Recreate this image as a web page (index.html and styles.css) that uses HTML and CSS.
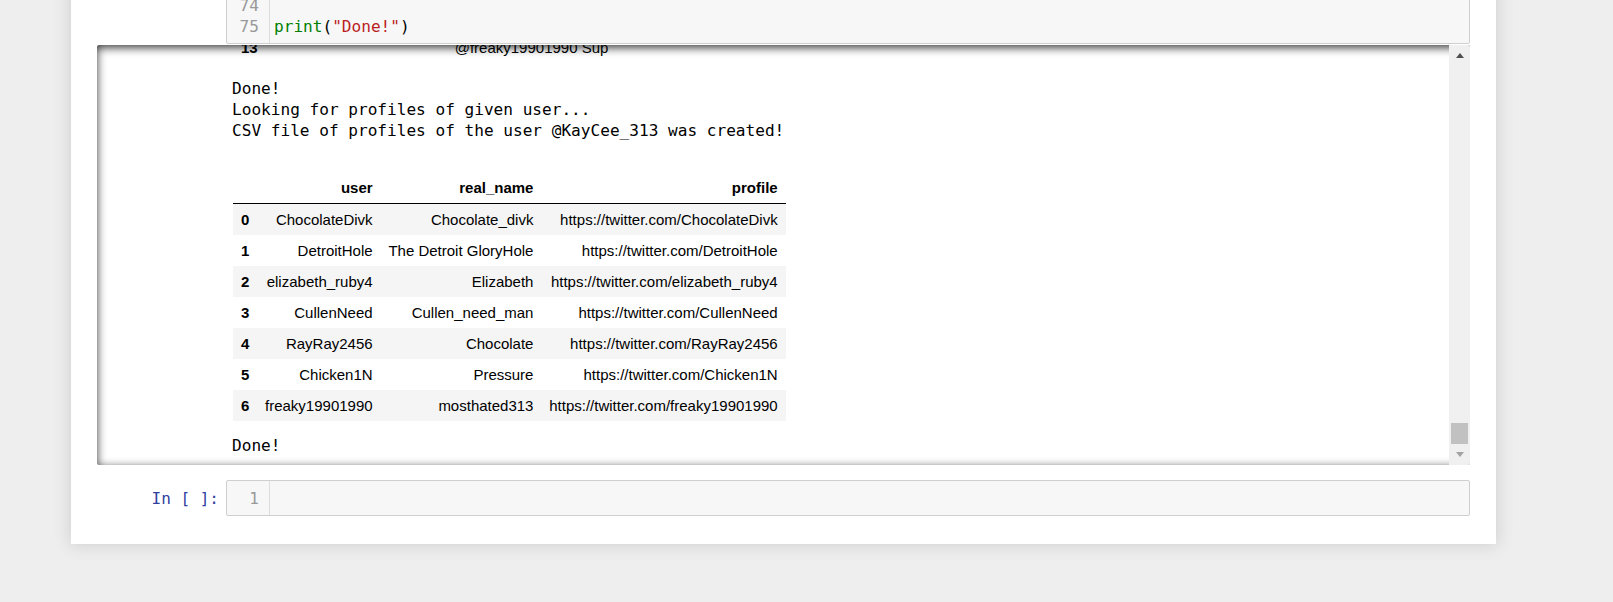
FILE: index.html
```html
<!DOCTYPE html>
<html>
<head>
<meta charset="utf-8">
<title>Notebook</title>
<link rel="stylesheet" href="styles.css">
</head>
<body>
<div class="notebook">
  <div class="cell">
    <div class="prompt"></div>
    <div class="input-area">
      <div class="gutter"><div>74</div><div>75</div></div>
      <div class="code"><div>&nbsp;</div><div><span class="builtin">print</span>(<span class="str">"Done!"</span>)</div></div>
    </div>
  </div>

  <div class="output-scroll">
    <div class="output-content">
      <table class="df df-clipped">
        <tbody>
          <tr><th>13</th><td class="wide">@freaky19901990 Sup</td></tr>
        </tbody>
      </table>
      <pre class="stream">Done!
Looking for profiles of given user...
CSV file of profiles of the user @KayCee_313 was created!</pre>
      <table class="df df-main">
        <thead>
          <tr><th></th><th>user</th><th>real_name</th><th>profile</th></tr>
        </thead>
        <tbody>
          <tr><th>0</th><td>ChocolateDivk</td><td>Chocolate_divk</td><td>https://twitter.com/ChocolateDivk</td></tr>
          <tr><th>1</th><td>DetroitHole</td><td>The Detroit GloryHole</td><td>https://twitter.com/DetroitHole</td></tr>
          <tr><th>2</th><td>elizabeth_ruby4</td><td>Elizabeth</td><td>https://twitter.com/elizabeth_ruby4</td></tr>
          <tr><th>3</th><td>CullenNeed</td><td>Cullen_need_man</td><td>https://twitter.com/CullenNeed</td></tr>
          <tr><th>4</th><td>RayRay2456</td><td>Chocolate</td><td>https://twitter.com/RayRay2456</td></tr>
          <tr><th>5</th><td>Chicken1N</td><td>Pressure</td><td>https://twitter.com/Chicken1N</td></tr>
          <tr><th>6</th><td>freaky19901990</td><td>mosthated313</td><td>https://twitter.com/freaky19901990</td></tr>
        </tbody>
      </table>
      <pre class="stream stream-last">Done!</pre>
    </div>
    <div class="scrollbar">
      <div class="sb-btn"><span class="arrow-up"></span></div>
      <div class="sb-track"><div class="sb-thumb"></div></div>
      <div class="sb-btn"><span class="arrow-down"></span></div>
    </div>
  </div>

  <div class="cell cell-next">
    <div class="prompt">In [ ]:</div>
    <div class="input-area input-next">
      <div class="gutter"><div>1</div></div>
      <div class="code"><div>&nbsp;</div></div>
    </div>
  </div>
</div>
</body>
</html>
```

FILE: styles.css
```css
html, body {
  margin: 0;
  padding: 0;
}

body {
  background: #eeeeee;
  height: 602px;
  overflow: hidden;
  font-family: "Liberation Sans", Arial, sans-serif;
}

.notebook {
  width: 1425px;
  margin: -30px 0 0 71px;
  padding: 19px 0 28px;
  background: #ffffff;
  box-shadow: 0 0 15px 1px rgba(87, 87, 87, 0.2);
}

.cell {
  display: flex;
}

.prompt {
  width: 155px;
  box-sizing: border-box;
  padding: 8px 7px 0 0;
  text-align: right;
  font-family: "DejaVu Sans Mono", monospace;
  font-size: 16px;
  line-height: 21px;
  color: #303f9f;
  white-space: pre;
}

.input-area {
  width: 1244px;
  box-sizing: border-box;
  display: flex;
  background: #f7f7f7;
  border: 1px solid #cfcfcf;
  border-radius: 2px;
  padding: 5px 0 6px;
  font-family: "DejaVu Sans Mono", monospace;
  font-size: 16.1px;
  line-height: 21px;
}

.gutter {
  width: 43px;
  box-sizing: border-box;
  margin: -5px 0 -6px;
  padding: 5px 10px 6px 0;
  border-right: 1px solid #dddddd;
  text-align: right;
  color: #999999;
}

.code {
  padding-left: 4px;
  color: #000000;
  white-space: pre;
}

.builtin { color: #008000; }
.str { color: #ba2121; }

.cell-next {
  margin-top: 15px;
}

.input-next {
  padding: 7px 0 6px;
}

.input-next .gutter {
  margin: -7px 0 -6px;
  padding: 7px 10px 6px 0;
}

/* output scroll area */
.output-scroll {
  margin: 1px 0 0 26px;
  width: 1373px;
  height: 420px;
  display: flex;
  border-radius: 2px;
  box-shadow: inset 0 2.5px 10px rgba(0, 0, 0, 0.8);
  overflow: hidden;
}

.output-content {
  flex: 1;
  overflow: hidden;
  padding-left: 135px;
}

.stream {
  margin: 15px 0 0;
  font-family: "DejaVu Sans Mono", monospace;
  font-size: 16.1px;
  line-height: 21px;
  color: #000000;
}

.stream-last {
  margin-top: 14px;
}

.df {
  margin-left: 1px;
  border-collapse: collapse;
  border: none;
  font-family: "Liberation Sans", Arial, sans-serif;
  font-size: 15px;
  line-height: 17px;
  color: #000000;
}

.df th,
.df td {
  padding: 7px 7.9px;
  text-align: right;
  vertical-align: middle;
  white-space: nowrap;
}

.df th {
  font-weight: bold;
}

.df td {
  font-weight: normal;
}

.df thead {
  border-bottom: 1px solid #000000;
}

.df-main tbody tr:nth-child(odd) {
  background: #f5f5f5;
}

.df-main {
  margin-top: 31px;
}

.df-clipped {
  margin-top: -13px;
}

.df-clipped .wide {
  width: 335px;
}

/* fake scrollbar */
.scrollbar {
  width: 21px;
  display: flex;
  flex-direction: column;
  background: #f0f0f0;
}

.sb-btn {
  height: 21px;
  display: flex;
  align-items: center;
  justify-content: center;
}

.arrow-up {
  width: 0;
  height: 0;
  border-left: 4.5px solid transparent;
  border-right: 4.5px solid transparent;
  border-bottom: 5px solid #505050;
}

.arrow-down {
  width: 0;
  height: 0;
  border-left: 4.5px solid transparent;
  border-right: 4.5px solid transparent;
  border-top: 5px solid #a3a3a3;
}

.sb-track {
  flex: 1;
  display: flex;
  flex-direction: column;
  justify-content: flex-end;
  padding: 0 2px;
}

.sb-thumb {
  height: 21px;
  background: #c1c1c1;
}
```
